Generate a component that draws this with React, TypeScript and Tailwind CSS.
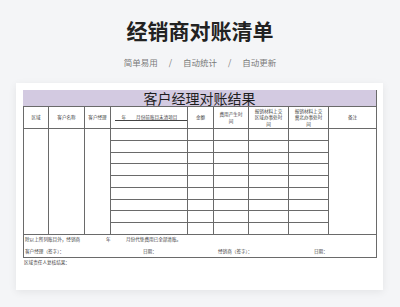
import React from "react";

const line = "border-[#6a6a6a]";

function HeadCell({ children, className = "" }: { children: React.ReactNode; className?: string }) {
  return (
    <div
      className={`border-r border-b ${line} flex items-center justify-center text-center text-[4.6px] leading-[6.3px] text-[#444] ${className}`}
    >
      {children}
    </div>
  );
}

function BodyCell({ className = "" }: { className?: string }) {
  return <div className={`border-r border-b ${line} ${className}`} />;
}

export default function App() {
  const rows = Array.from({ length: 9 });
  return (
    <div className="w-[400px] h-[307px] overflow-hidden bg-[#f4f5f7] flex flex-col font-['Noto_Sans_CJK_SC','Noto_Sans',sans-serif]">
      <div className="mt-[17px] text-center text-[21px] leading-[26px] font-bold text-[#222]">
        经销商对账清单
      </div>
      <div className="mt-[13px] h-[12px] flex items-center justify-center text-[8.5px] leading-[12px] text-[#7a7a7a]">
        <span>简单易用</span>
        <span className="mx-[11px]">/</span>
        <span>自动统计</span>
        <span className="mx-[11px]">/</span>
        <span>自动更新</span>
      </div>
      <div className="mt-[15px] ml-[16px] w-[367px] h-[207px] bg-white shadow-[0_2px_8px_rgba(0,0,0,0.07)] pl-[7px] pt-[7px]">
        <div className={`w-[354px] h-[16px] bg-[#d3cae1] border-r ${line} text-center text-[14px] leading-[16px] text-[#1e1e1e]`}>
          客户经理对账结果
        </div>
        <div
          className={`w-[354px] h-[129px] border-l border-t ${line} grid grid-cols-[25px_36px_26px_77px_26px_35px_40px_40px_48px] grid-rows-[22px_repeat(9,1fr)]`}
        >
          <HeadCell>区域</HeadCell>
          <HeadCell>客户名称</HeadCell>
          <HeadCell>客户经理</HeadCell>
          <HeadCell>
            <div className="flex border-b border-[#444] w-[72px] ml-[3px] leading-[6px]">
              <span className="pl-[7px]">年</span>
              <span className="ml-[10px]">月份前账目未清项目</span>
            </div>
          </HeadCell>
          <HeadCell>金额</HeadCell>
          <HeadCell>
            <div className="w-[24px]">费用产生时间</div>
          </HeadCell>
          <HeadCell>
            <div className="w-[29px]">报销材料上交区域办事处时间</div>
          </HeadCell>
          <HeadCell>
            <div className="w-[29px]">报销材料上交冀北办事处时间</div>
          </HeadCell>
          <HeadCell>备注</HeadCell>

          <BodyCell className="row-span-9" />
          <BodyCell className="row-span-9" />
          <BodyCell className="row-span-9" />
          <BodyCell />
          <BodyCell />
          <BodyCell />
          <BodyCell />
          <BodyCell />
          <BodyCell className="row-span-9" />
          {rows.slice(1).map((_, i) => (
            <React.Fragment key={i}>
              <BodyCell className="col-start-4" />
              <BodyCell />
              <BodyCell />
              <BodyCell />
              <BodyCell />
            </React.Fragment>
          ))}
        </div>
        <div className={`w-[354px] h-[23px] border-l border-r border-b ${line} text-[4.6px] text-[#444]`}>
          <div className="h-[8px] flex items-center">
            <span className="w-[82px] pl-[1px]">除以上所列账目外，经销商</span>
            <span className="w-[20px]">年</span>
            <span>月份代垫费用已全部清账。</span>
          </div>
          <div className="mt-[4px] h-[8px] flex items-center">
            <span className="w-[119px] pl-[1px]">客户经理（签字）：</span>
            <span className="w-[75px]">日期：</span>
            <span className="w-[96px]">经销商（签字）：</span>
            <span>日期：</span>
          </div>
        </div>
        <div className="h-[8px] flex items-center text-[4.6px] text-[#444] pl-[1px]">
          区域责任人复核结果：
        </div>
      </div>
    </div>
  );
}
